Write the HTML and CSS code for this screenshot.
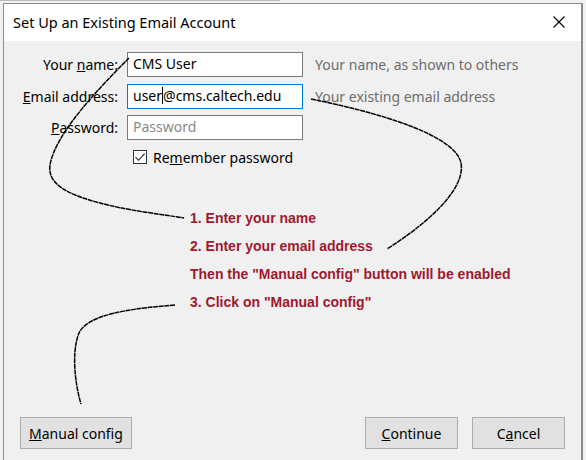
FILE: index.html
```html
<!DOCTYPE html>
<html>
<head>
<meta charset="utf-8">
<link rel="stylesheet" href="styles.css">
</head>
<body>
<div class="backdrop"></div>
<div class="dialog">
  <div class="titlebar">
    <span class="title">Set Up an Existing Email Account</span>
    <svg class="close" width="12" height="12" viewBox="0 0 12 12"><path d="M0.5 0.5 L11.5 11.5 M11.5 0.5 L0.5 11.5" stroke="#000" stroke-width="1.1" fill="none"/></svg>
  </div>
  <div class="body">
    <div class="form">
      <label class="lbl">Your <u>n</u>ame:</label>
      <div class="input">CMS User</div>
      <div class="hint">Your name, as shown to others</div>

      <label class="lbl"><u>E</u>mail address:</label>
      <div class="input focused">user<span class="caret"></span>@cms.caltech.edu</div>
      <div class="hint">Your existing email address</div>

      <label class="lbl"><u>P</u>assword:</label>
      <div class="input placeholder">Password</div>
      <div class="hint"></div>
    </div>
    <div class="remember">
      <span class="checkbox"><svg width="12" height="12" viewBox="0 0 12 12"><path d="M1.5 6.2 L4.6 9.3 L10.6 2.6" stroke="#222" stroke-width="1.1" fill="none"/></svg></span>
      <span>Re<u>m</u>ember password</span>
    </div>
    <ul class="notes">
      <li>1. Enter your name</li>
      <li>2. Enter your email address</li>
      <li>Then the "Manual config" button will be enabled</li>
      <li>3. Click on "Manual config"</li>
    </ul>
    <div class="footer">
      <button class="btn manual"><u>M</u>anual config</button>
      <div class="spacer"></div>
      <button class="btn"><u>C</u>ontinue</button>
      <button class="btn">C<u>a</u>ncel</button>
    </div>
  </div>
  <svg class="arrows" width="586" height="460" viewBox="0 0 586 460">
    <g stroke="#000" stroke-width="1.5" fill="none" stroke-dasharray="5 0.6" stroke-linecap="butt">
      <path d="M129,58 C95,92 55,135 50,165 C47,185 70,195 100,203 C130,211 160,214 184,218"/>
      <path d="M311,99 C380,113 455,135 461,163 C466,190 425,225 387,249"/>
      <path d="M175,305 C125,309 88,315 79,333 C72,350 74,380 81,404"/>
    </g>
  </svg>
</div>
</body>
</html>
```

FILE: styles.css
```css
html, body {
  margin: 0;
  padding: 0;
}
body {
  width: 586px;
  height: 460px;
  overflow: hidden;
  background: #f2f2f2;
  font-family: "Noto Sans", "Open Sans", sans-serif;
  font-size: 14px;
  color: #000;
}
.backdrop {
  height: 2px;
  border-top: 1px solid #bcbcbc;
  width: 280px;
}
.dialog {
  position: relative;
  margin: 0 3px 0 3px;
  border: 1px solid #8c8c8c;
  border-right: 2px solid #8a8a8a;
  height: 470px;
  background: #f0f0f0;
  box-sizing: border-box;
}
.titlebar {
  height: 37px;
  background: #fff;
  display: flex;
  align-items: center;
  padding-left: 9px;
  padding-right: 16px;
}
.title {
  flex: 1;
  font-size: 14.5px;
  color: #000;
  position: relative;
  top: -1px;
}
.close {
  position: relative;
  top: -1px;
}
.body {
  padding-top: 11px;
}
.form {
  display: grid;
  grid-template-columns: 114px 176px auto;
  grid-auto-rows: 25px;
  row-gap: 6.5px;
  column-gap: 9px;
}
.lbl {
  text-align: right;
  line-height: 25px;
  white-space: nowrap;
}
.input {
  width: 176px;
  height: 25px;
  box-sizing: border-box;
  border: 1px solid #7a7a7a;
  background: #fff;
  padding-left: 5px;
  line-height: 22px;
  white-space: nowrap;
  font-size: 14px;
}
.input.focused {
  border-color: #0078d7;
}
.input.placeholder {
  color: #8a8a8a;
}
.caret {
  display: inline-block;
  width: 1px;
  height: 17px;
  background: #000;
  vertical-align: -3px;
}
.hint {
  margin-left: 3px;
  line-height: 25px;
  color: #6d6d6d;
  white-space: nowrap;
  font-size: 14px;
}
.remember {
  display: flex;
  align-items: center;
  margin-top: 9px;
  padding-left: 129px;
  height: 16px;
}
.checkbox {
  width: 14px;
  height: 14px;
  box-sizing: border-box;
  border: 1px solid #333;
  background: #fff;
  display: inline-flex;
  align-items: center;
  justify-content: center;
  margin-right: 6px;
}
.notes {
  list-style: none;
  margin: 39px 0 0 0;
  padding: 0 0 0 186px;
  font-family: "Liberation Sans", Arial, sans-serif;
  font-weight: bold;
  font-size: 14px;
  color: #a0182f;
  line-height: 28px;
}
.footer {
  display: flex;
  align-items: center;
  margin-top: 101px;
  padding: 0 16px 0 16px;
  gap: 14px;
}
.spacer {
  flex: 1;
}
.btn {
  font-family: "Noto Sans", "Open Sans", sans-serif;
  font-size: 14px;
  color: #000;
  background: #e1e1e1;
  border: 1px solid #adadad;
  height: 32px;
  width: 93px;
  padding: 0;
  margin: 0;
}
.btn.manual {
  width: 112px;
}
.arrows {
  position: absolute;
  left: -4px;
  top: -4px;
  pointer-events: none;
}
```
